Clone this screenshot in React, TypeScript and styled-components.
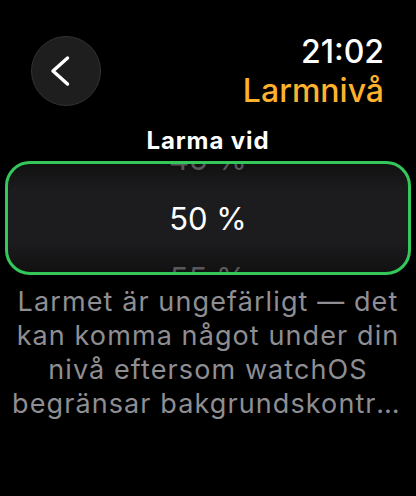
import styled, {createGlobalStyle} from 'styled-components';

const GlobalStyle = createGlobalStyle`
    html, body {
        margin: 0;
        padding: 0;
        background: #000;
    }
    body {
        font-family: Inter, "Noto Sans", "Liberation Sans", sans-serif;
        -webkit-font-smoothing: antialiased;
    }
`;

const Screen = styled.div`
    width: 416px;
    height: 496px;
    background: #000;
    overflow: hidden;
    display: flex;
    flex-direction: column;
`;

const Header = styled.div`
    display: flex;
    justify-content: space-between;
    align-items: flex-start;
    padding: 32px 32px 0 31px;
`;

const BackButton = styled.button`
    width: 70px;
    height: 70px;
    margin-top: 4px;
    border-radius: 50%;
    background: #1e1e1f;
    border: 1.5px solid #333335;
    display: flex;
    align-items: center;
    justify-content: center;
    padding: 0;
    box-sizing: border-box;
`;

const TitleBlock = styled.div`
    display: flex;
    flex-direction: column;
    align-items: flex-end;
`;

interface HeadingProps {
    readonly color: string;
}

const HeaderLine = styled.div<HeadingProps>`
    font-size: 32px;
    line-height: 39px;
    font-weight: 500;
    color: ${props => props.color};
`;

const Section = styled.div`
    display: flex;
    flex-direction: column;
    align-items: center;
    padding: 17px 5px 0;
`;

const SectionTitle = styled.div`
    font-size: 24px;
    line-height: 28px;
    font-weight: 700;
    letter-spacing: 0.9px;
    color: #fff;
`;

const Picker = styled.div`
    margin-top: 6px;
    width: 100%;
    height: 114px;
    flex: 0 0 114px;
    box-sizing: border-box;
    border: 3px solid #34c759;
    border-radius: 25px;
    background: linear-gradient(#111112 0%, #1c1c1e 25%, #1c1c1e 72%, #111112 100%);
    overflow: hidden;
    display: flex;
    flex-direction: column;
    align-items: center;
    justify-content: center;
`;

interface ValueProps {
    readonly selected: boolean;
}

const PickerValue = styled.div<ValueProps>`
    flex: 0 0 60px;
    display: flex;
    align-items: center;
    justify-content: center;
    font-size: 31px;
    color: ${props => props.selected ? '#fff' : '#58585c'};
`;

const Description = styled.div`
    margin: 10px 12px 0;
    font-size: 27px;
    line-height: 34px;
    letter-spacing: 1.1px;
    color: #8e8e93;
    text-align: center;
`;

const LastLine = styled.div`
    white-space: nowrap;
    overflow: hidden;
    text-overflow: ellipsis;
`;

function Chevron() {
    return <svg width="26" height="32" viewBox="0 0 26 32" style={{marginRight: 6}}>
        <path d="M17.5 3 L3 16 L17.5 29" fill="none" stroke="#fff" strokeWidth="3.4"
              strokeLinecap="round" strokeLinejoin="round"/>
    </svg>;
}

export default function App() {
    const values = [45, 50, 55];
    const selected = 50;

    return <Screen>
        <GlobalStyle/>
        <Header>
            <BackButton aria-label="Tillbaka"><Chevron/></BackButton>
            <TitleBlock>
                <HeaderLine color="#fff">21:02</HeaderLine>
                <HeaderLine color="#fdb12c">Larmnivå</HeaderLine>
            </TitleBlock>
        </Header>
        <Section>
            <SectionTitle>Larma vid</SectionTitle>
            <Picker>
                {values.map(v =>
                    <PickerValue key={v} selected={v === selected}>{v} %</PickerValue>
                )}
            </Picker>
        </Section>
        <Description>
            Larmet är ungefärligt — det kan komma något under din nivå eftersom watchOS
            <LastLine>begränsar bakgrundskontrollerna.</LastLine>
        </Description>
    </Screen>;
}
